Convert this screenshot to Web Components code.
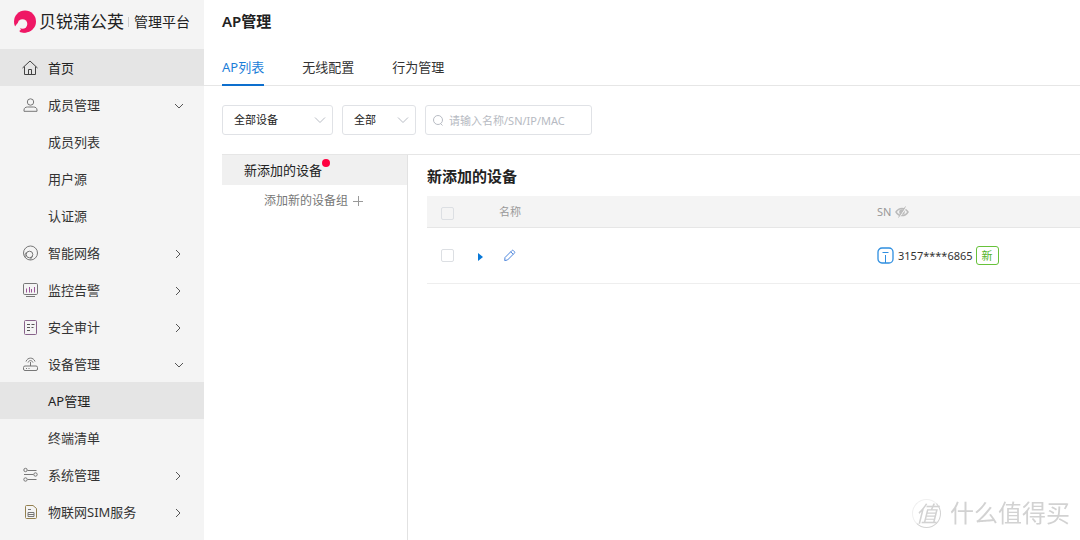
<!DOCTYPE html>
<html lang="zh-CN">
<head>
<meta charset="utf-8">
<meta name="viewport" content="width=device-width, initial-scale=1">
<title>AP管理</title>
<style>
  html { height: 100%; }
  body { margin: 0; min-height: 100%; background: #fff; color: #333; font: 13px/20px "Noto Sans", "Noto Sans CJK SC", sans-serif; }
</style>
</head>
<body>
<app-shell>
  <side-nav slot="nav">
    <brand-logo slot="brand"></brand-logo>
    <nav-item icon="home" active>首页</nav-item>
    <nav-item icon="user" arrow="down">成员管理</nav-item>
    <nav-item>成员列表</nav-item>
    <nav-item>用户源</nav-item>
    <nav-item>认证源</nav-item>
    <nav-item icon="net" arrow="right">智能网络</nav-item>
    <nav-item icon="monitor" arrow="right">监控告警</nav-item>
    <nav-item icon="audit" arrow="right">安全审计</nav-item>
    <nav-item icon="router" arrow="down">设备管理</nav-item>
    <nav-item active>AP管理</nav-item>
    <nav-item>终端清单</nav-item>
    <nav-item icon="system" arrow="right">系统管理</nav-item>
    <nav-item icon="sim" arrow="right">物联网SIM服务</nav-item>
  </side-nav>
  <page-header>
    <span slot="title">AP管理</span>
    <tab-link active>AP列表</tab-link>
    <tab-link>无线配置</tab-link>
    <tab-link>行为管理</tab-link>
  </page-header>
  <filter-bar></filter-bar>
  <split-panel>
    <device-groups slot="side"></device-groups>
    <device-table></device-table>
  </split-panel>
</app-shell>
<site-mark></site-mark>

<script>
const component = (name, html, setup) => {
  const template = document.createElement('template');
  template.innerHTML = '<style>:host,*{box-sizing:border-box}a{color:inherit;text-decoration:none}</style>' + html;
  customElements.define(name, class extends HTMLElement {
    constructor() {
      super();
      this.attachShadow({ mode: 'open' }).append(template.content.cloneNode(true));
    }
    connectedCallback() { if (setup) setup(this, this.shadowRoot); }
  });
};

const icons = {
  home: '<path stroke="#444" d="M.5 8 8 1 15.500 8M2.500 6.500V14.500H13.500V6.500M6.500 14.500V9.500H9.500V14.500"/>',
  user: '<circle cx="8.500" cy="5" r="3.200"/><path d="M2 14.300V13c0-2 1.500-3 3.500-3h6c2 0 3.500 1 3.500 3v1.300z"/>',
  net: '<circle cx="8.500" cy="8" r="7"/><circle cx="7.500" cy="9.500" r="3.300"/><path d="M3.500 12.700c-.8-2-.6-4 .8-5.300M10.500 11.300 8 14.800"/>',
  monitor: '<rect x="1.500" y="1.500" width="14" height="11" rx="1.200"/><path d="M4 14.500h9"/><path stroke="#9b5799" d="M4.500 6.500v4M7.500 5v5.500M9.500 7v3.500M12.500 5v5.500"/>',
  audit: '<rect x="2.500" y="1.500" width="12" height="14" rx="1" stroke="#88638b"/><path stroke="#555" d="M5 5.500h3M9.500 5.500h3M5 8.500h3M9.500 8.500h2M5 11.500h3"/>',
  router: '<rect x="1.500" y="10" width="14" height="4.500" rx="1.500"/><path d="M8.500 10V6M4 5.500C5.500 1 11.500 1 13 5.500M6 6.500c1-2.500 4-2.500 5 0M4 12.500h1M6.500 12.500h1"/>',
  system: '<circle cx="3.500" cy="3" r="1.700"/><circle cx="13.500" cy="7.500" r="1.700"/><circle cx="3.500" cy="12.500" r="1.700"/><path d="M5.500 3.500h9M2 7.500H11.500M5.500 12.500h9"/>',
  sim: '<path stroke="#94804f" d="M3.500 2.500c0-.6.400-1 1-1H11L14.500 4.500v9c0 .6-.4 1-1 1h-9c-.6 0-1-.4-1-1z"/><path d="M6 8.500h6v4H6zM6 10.500h6M6 5.500h3"/>'
};

component('app-shell', `
  <style>
    :host { display: grid; grid-template-columns: 204px minmax(0, 1fr); min-height: 100vh; }
    main { min-width: 0; display: flex; flex-direction: column; }
    ::slotted(split-panel) { flex: 1; }
  </style>
  <slot name="nav"></slot><main><slot></slot></main>`);

component('side-nav', `
  <style>
    :host { display: block; background: #f4f4f4; }
    nav { display: flex; flex-direction: column; }
  </style>
  <slot name="brand"></slot><nav aria-label="主菜单"><slot></slot></nav>`);

component('brand-logo', `
  <style>
    :host { display: flex; align-items: center; height: 49px; padding: 0 0 6px 13px; color: #222; white-space: nowrap; }
    svg { width: 24px; height: 24px; margin-right: 2px; flex: none; }
    b { font-size: 17px; font-weight: 400; line-height: 24px; }
    i { width: 1px; height: 10px; background: #ccc; margin: 0 5px 0 4px; }
    span { font-size: 14px; line-height: 24px; }
  </style>
  <svg viewBox="0 0 24 24" aria-hidden="true"><circle cx="12" cy="11.500" r="11" fill="#ef1765"/><path d="M1 18l3.500-5 3.500 7-2 3-4-2z" fill="#f4f4f4"/><circle cx="9.500" cy="14" r="4.800" fill="#f4f4f4"/><path d="M7.500 22.300c-1.200-.7-1.300-1.700-.3-2 3.800.7 7.300-1.300 7.300-5.300l5 1c-1.500 5-6.500 8-12 6.300z" fill="#ef1765"/></svg>
  <b>贝锐蒲公英</b><i></i><span>管理平台</span>`);

component('nav-item', `
  <style>
    :host { display: block; color: #333; }
    :host([active]) { background: #e5e5e5; color: #222; }
    a { display: grid; grid-template-columns: 16px 1fr 10px; column-gap: 10px; align-items: center; height: 37px; padding: 0 20px 0 22px; }
    svg { fill: none; stroke: #777; display: block; }
    .icon { width: 16px; height: 16px; }
    .arrow { width: 10px; height: 10px; stroke: #555; grid-column: 3; margin-top: 2px; }
    span { grid-column: 2; white-space: nowrap; }
  </style>
  <a href="#"><svg class="icon" viewBox="0 0 16 16" aria-hidden="true"></svg><span><slot></slot></span></a>`,
  (host, root) => {
    root.querySelector('.icon').innerHTML = icons[host.getAttribute('icon')] || '';
    const arrow = host.getAttribute('arrow');
    if (arrow && !root.querySelector('.arrow')) {
      const d = arrow === 'down' ? 'M1 3l4 4 4-4' : 'M2 1l4 4-4 4';
      root.querySelector('a').insertAdjacentHTML('beforeend', `<svg class="arrow" viewBox="0 0 10 10" aria-hidden="true"><path d="${d}"/></svg>`);
    }
  });

component('page-header', `
  <style>
    :host { display: block; padding: 11px 18px 0; border-bottom: 1px solid #e6e6e6; }
    h1 { margin: 0; font-size: 15px; line-height: 20px; font-weight: 600; color: #222; }
    nav { display: flex; gap: 38px; height: 37px; margin: 18px 0 -1px; }
  </style>
  <h1><slot name="title"></slot></h1><nav aria-label="页签"><slot></slot></nav>`);

component('tab-link', `
  <style>
    :host { display: block; }
    a { display: block; height: 37px; padding: 8px 0 7px; border-bottom: 2px solid transparent; white-space: nowrap; }
    :host([active]) a { color: #1c7ed8; border-color: #0d6fce; }
  </style>
  <a href="#"><slot></slot></a>`);

component('filter-bar', `
  <style>
    :host { display: flex; gap: 9px; padding: 19px 18px; }
    label { position: relative; display: block; }
    select, input { display: block; width: 100%; height: 30px; border: 1px solid #e0e2e6; border-radius: 3px; background: #fff; color: #222; font: inherit; font-size: 11px; line-height: 16px; outline: 0; margin: 0; }
    select { appearance: none; padding: 0 24px 0 11px; }
    input { padding: 0 8px 0 23px; }
    input::placeholder { color: #b6bac2; opacity: 1; }
    svg { position: absolute; top: 9px; width: 12px; height: 12px; fill: none; stroke: #b8bcc4; pointer-events: none; }
    .type { width: 111px; } .state { width: 74px; } .search { width: 167px; }
    .type svg, .state svg { right: 7px; }
    .search svg { left: 7px; }
  </style>
  <label class="type"><select aria-label="设备类型"><option>全部设备</option></select><svg viewBox="0 0 12 12"><path d="M1 3.500l5 5 5-5"/></svg></label>
  <label class="state"><select aria-label="状态"><option>全部</option></select><svg viewBox="0 0 12 12"><path d="M1 3.500l5 5 5-5"/></svg></label>
  <label class="search"><input type="text" aria-label="搜索" placeholder="请输入名称/SN/IP/MAC"><svg viewBox="0 0 12 12"><circle cx="6" cy="6" r="4.500"/><path d="M8.500 9.500l2 2"/></svg></label>`);

component('split-panel', `
  <style>
    :host { display: grid; grid-template-columns: 186px minmax(0, 1fr); margin-left: 18px; border-top: 1px solid #e6e6e6; }
    aside { border-right: 1px solid #e2e2e2; }
    section { padding-left: 19px; min-width: 0; }
  </style>
  <aside><slot name="side"></slot></aside><section><slot></slot></section>`);

component('device-groups', `
  <style>
    :host { display: block; }
    a { display: block; height: 30px; padding: 5px 22px; background: #f0f0f0; color: #222; }
    span { position: relative; }
    i { position: absolute; left: 100%; top: -2px; width: 8px; height: 8px; border-radius: 50%; background: #ff0040; }
    button { display: flex; align-items: center; gap: 4px; width: 100%; height: 32px; margin: 0; padding: 0 0 0 42px; border: 0; background: none; color: #777; font: inherit; font-size: 12px; line-height: 20px; cursor: pointer; }
    svg { width: 12px; height: 12px; stroke: #999; }
  </style>
  <a href="#"><span>新添加的设备<i></i></span></a>
  <button type="button">添加新的设备组<svg viewBox="0 0 12 12" aria-hidden="true"><path d="M1 6.500h10M6.500 1v10"/></svg></button>`);

component('device-table', `
  <style>
    :host { display: block; }
    h2 { margin: 0; padding: 11px 0 10px; font-size: 15px; line-height: 20px; font-weight: 600; color: #222; }
    table { width: 100%; border-collapse: separate; border-spacing: 0; table-layout: fixed; }
    th, td { padding: 0; text-align: left; vertical-align: middle; border-bottom: 1px solid #eee; }
    th { height: 32px; background: #f4f4f4; border-color: #e6e6e6; color: #999; font-size: 11px; line-height: 16px; font-weight: 400; }
    td { height: 56px; font-size: 11px; line-height: 20px; }
    .check { width: 50px; padding-left: 14px; }
    .open { width: 22px; } .name { width: 378px; }
    input { display: block; appearance: none; width: 13px; height: 13px; margin: 0; border: 1px solid #dcdfe3; border-radius: 2px; background: transparent; }
    th input { margin-top: 3px; }
    button { display: block; border: 0; padding: 0; background: none; cursor: pointer; }
    svg { display: block; fill: none; }
    .row { display: flex; align-items: center; gap: 4px; }
    .device { gap: 3px; }
    .ap { width: 18px; height: 18px; }
    .tag { color: #52b428; border: 1px solid #67c23a; border-radius: 3px; width: 23px; height: 19px; line-height: 17px; text-align: center; }
    .edit { margin-left: 4px; }
  </style>
  <h2>新添加的设备</h2>
  <table>
    <thead><tr>
      <th class="check"><input type="checkbox" aria-label="全选"></th><th class="open"></th><th class="name">名称</th>
      <th><div class="row">SN<svg width="14" height="12" viewBox="0 0 14 12" aria-hidden="true"><path d="M1 6C4 1.200 10 1.200 13 6 10 10.800 4 10.800 1 6z" stroke="#bbb" stroke-width="1.500"/><circle cx="7" cy="6" r="2.800" fill="#bbb"/><path d="M11.500 1l-7 10" stroke="#f4f4f4" stroke-width="1.200"/><path d="M10.500.5l-7 11" stroke="#bbb"/></svg></div></th>
    </tr></thead>
    <tbody><tr>
      <td class="check"><input type="checkbox" aria-label="选择设备"></td>
      <td><button type="button" aria-label="展开"><svg width="8" height="10" viewBox="0 0 8 10"><path d="M1 2l5 4-5 4z" fill="#0878d8"/></svg></button></td>
      <td><button class="edit" type="button" aria-label="编辑"><svg width="13" height="13" viewBox="0 0 13 13" stroke="#4b84dc"><path d="M2 8.500 8.700 1.800c.7-.7 1.200-.7 1.800-.1l.8.800c.6.600.6 1.100-.1 1.800L4.500 11l-2.800.5zM7.700 2.800l2.500 2.500"/></svg></button></td>
      <td><div class="row device"><svg class="ap" viewBox="0 0 18 18" stroke="#2f8fe0" aria-hidden="true"><rect x="1" y="1" width="15" height="15" rx="4" stroke-width="1.300"/><path d="M5.500 5.500h6M8.500 8v8"/></svg><span>3157****6865</span><span class="tag">新</span></div></td>
    </tr></tbody>
  </table>`);

component('site-mark', `
  <style>
    :host { position: fixed; right: 10px; bottom: 9px; display: flex; align-items: center; gap: 9px; pointer-events: none; color: #d2d2d2; white-space: nowrap; }
    i { width: 29px; height: 29px; border-radius: 50%; border: 1px solid #f0f0f0; border-right-color: #d2d2d2; border-bottom-color: #d2d2d2; font-size: 22px; line-height: 26px; text-align: center; }
    span { font-size: 24px; line-height: 36px; }
  </style>
  <i>值</i><span>什么值得买</span>`);
</script>
</body>
</html>
